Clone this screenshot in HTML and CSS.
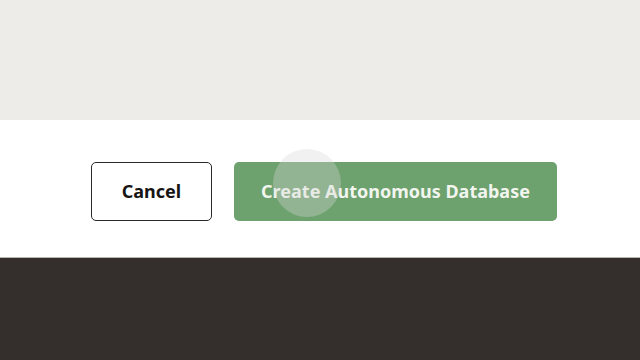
FILE: index.html
```html
<!DOCTYPE html>
<html lang="en">
<head>
    <meta charset="UTF-8">
    <meta name="viewport" content="width=device-width, initial-scale=1.0">
    <title>Create Autonomous Database</title>
    <link rel="stylesheet" href="styles.css">
</head>
<body>
    <div class="form-top"></div>
    <div class="actions">
        <button class="btn btn-cancel">Cancel</button>
        <button class="btn btn-primary">Create Autonomous Database<span class="ripple"></span></button>
    </div>
    <div class="footer"></div>
</body>
</html>
```

FILE: styles.css
```css
body { margin: 0; font-family: "Noto Sans", "Open Sans", sans-serif; background: #fff; overflow: hidden; }
.form-top { height: 120px; background: #eeece8; }
.actions { height: 138px; display: flex; align-items: flex-start; gap: 22px; padding: 42px 0 0 91px; box-sizing: border-box; background: #fff; border-bottom: 1px solid #b9b6b0; }
.btn { height: 59px; border-radius: 5px; font-family: inherit; font-weight: bold; font-size: 18px; line-height: 1; padding-bottom: 2px; cursor: pointer; position: relative; }
.btn-cancel { width: 121px; background: #fff; color: #161513; border: 1.5px solid #2b2926; }
.btn-primary { width: 323px; background: #6da16d; color: #f2f5ef; border: none; overflow: visible; }
.ripple { position: absolute; left: 39px; top: -13px; width: 68px; height: 68px; border-radius: 50%; background: rgba(215, 215, 215, 0.35); pointer-events: none; }
.footer { height: 102px; background: #342f2c; }
```
